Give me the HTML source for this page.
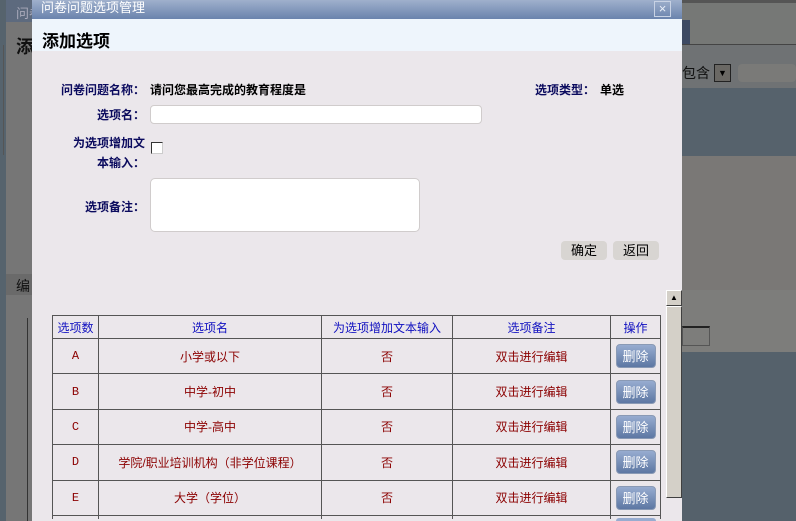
<!DOCTYPE html>
<html><head><meta charset="utf-8"><style>
*{margin:0;padding:0;box-sizing:border-box}
html,body{width:796px;height:521px;overflow:hidden}
body{font-family:"Liberation Sans","Noto Sans CJK SC","WenQuanYi Zen Hei",sans-serif;font-size:12px}
#w{position:absolute;left:0;top:0;width:796px;height:521px;overflow:hidden;background:#767676}
.a{position:absolute;white-space:nowrap}
.lbl{color:#0b0b5e;font-weight:bold;font-size:12px;text-align:right}
#tc{position:absolute;left:52px;top:315px;width:610px;height:206px;overflow:hidden}
table{border-collapse:collapse;width:609px}
td{border:1px solid #555;text-align:center;color:#8b0000;font-size:12px;height:35.4px;padding:0}
td.m{font-family:"Liberation Mono",monospace;font-size:12px}
tr.h td{color:#1010c0;height:23px}
tr.l td{height:4px;border-bottom:none}
.del{display:inline-block;width:40px;height:24px;line-height:23px;border-radius:4px;background:linear-gradient(#97acd0,#5d77a3);color:#fff;border:1px solid #8a9ab5;font-size:13px}
.btn{background:#d8d5d2;border-radius:4px;height:19px;line-height:19px;text-align:center;font-size:13px;color:#000;width:46px}
</style></head><body><div id="w">
<div class="a" style="left:0;top:0;width:6px;height:521px;background:#56636d"></div>
<div class="a" style="left:6px;top:0;width:26px;height:22px;background:#5d6a7e;color:#aab;font-size:13px;padding:3px 0 0 10px;overflow:hidden">问卷</div>
<div class="a" style="left:16px;top:33px;font-size:18px;font-weight:bold;color:#111">添</div>
<div class="a" style="left:3px;top:45px;width:1px;height:110px;background:#555"></div>
<div class="a" style="left:6px;top:274px;width:26px;height:21px;background:#6a6a6a;font-size:14px;color:#111;padding:2px 0 0 10px;overflow:hidden">编</div>
<div class="a" style="left:27px;top:318px;width:1px;height:203px;background:#333"></div>
<div class="a" style="left:682px;top:0;width:114px;height:44px;background:#767876;border-top:3px solid #555"></div>
<div class="a" style="left:682px;top:20px;width:8px;height:24px;background:#3d4a63"></div>
<div class="a" style="left:682px;top:44px;width:114px;height:1px;background:#444"></div>
<div class="a" style="left:682px;top:45px;width:114px;height:43px;background:#6f7274"></div>
<div class="a" style="left:682px;top:63px;font-size:14px;color:#111">包含</div>
<div class="a" style="left:714px;top:64px;width:17px;height:18px;background:#6a6864;border:1px solid #222;color:#000;font-size:9px;text-align:center;line-height:16px">▼</div>
<div class="a" style="left:738px;top:64px;width:58px;height:18px;background:#7a7a78;border-radius:4px"></div>
<div class="a" style="left:682px;top:88px;width:114px;height:68px;background:#56626c"></div>
<div class="a" style="left:682px;top:156px;width:114px;height:134px;background:#7a7876"></div>
<div class="a" style="left:682px;top:290px;width:114px;height:62px;background:#7d7d7b"></div>
<div class="a" style="left:682px;top:326px;width:28px;height:20px;border:1px solid #555;border-top:2px solid #222"></div>
<div class="a" style="left:682px;top:352px;width:114px;height:169px;background:#55616b"></div>
<div class="a" style="left:32px;top:0;width:650px;height:521px;background:#ebe7eb">
 <div class="a" style="left:0;top:0;width:650px;height:19px;background:linear-gradient(#9fb0cc,#6a83ad);color:#fff;font-size:13px;padding:0 0 0 9px;line-height:15px">问卷问题选项管理</div>
 <div class="a" style="left:622px;top:1px;width:17px;height:16px;border:1px solid #c8d2e4;color:#e8eef8;text-align:center;line-height:13px;font-size:13px">×</div>
 <div class="a" style="left:0;top:19px;width:650px;height:32px;background:#eef5fc;font-size:17px;font-weight:bold;padding:8px 0 0 10px;color:#000">添加选项</div>
</div>
<div class="a lbl" style="left:40px;top:81px;width:105px">问卷问题名称：</div>
<div class="a" style="left:150px;top:81px;font-weight:bold;color:#000">请问您最高完成的教育程度是</div>
<div class="a lbl" style="left:520px;top:81px;width:75px">选项类型：</div>
<div class="a" style="left:600px;top:81px;font-weight:bold;color:#000">单选</div>
<div class="a lbl" style="left:60px;top:106px;width:85px">选项名：</div>
<div class="a" style="left:150px;top:105px;width:332px;height:19px;background:#fff;border:1px solid #d0cccc;border-radius:4px"></div>
<div class="a lbl" style="left:50px;top:133px;width:95px;line-height:20px">为选项增加文<br>本输入：</div>
<div class="a" style="left:151px;top:142px;width:12px;height:12px;background:#fff;border:1px solid #333;border-right-color:#ccc;border-bottom-color:#ccc"></div>
<div class="a lbl" style="left:60px;top:198px;width:85px">选项备注：</div>
<div class="a" style="left:150px;top:178px;width:270px;height:54px;background:#fff;border:1px solid #d0cccc;border-radius:5px"></div>
<div class="a btn" style="left:561px;top:241px">确定</div>
<div class="a btn" style="left:613px;top:241px">返回</div>
<div id="tc"><table>
<tr class="h"><td style="width:46px">选项数</td><td style="width:223px">选项名</td><td style="width:131px">为选项增加文本输入</td><td style="width:158px">选项备注</td><td>操作</td></tr>
<tr><td class="m">A</td><td>小学或以下</td><td>否</td><td>双击进行编辑</td><td><span class="del">删除</span></td></tr>
<tr><td class="m">B</td><td>中学-初中</td><td>否</td><td>双击进行编辑</td><td><span class="del">删除</span></td></tr>
<tr><td class="m">C</td><td>中学-高中</td><td>否</td><td>双击进行编辑</td><td><span class="del">删除</span></td></tr>
<tr><td class="m">D</td><td>学院/职业培训机构（非学位课程）</td><td>否</td><td>双击进行编辑</td><td><span class="del">删除</span></td></tr>
<tr><td class="m">E</td><td>大学（学位）</td><td>否</td><td>双击进行编辑</td><td><span class="del">删除</span></td></tr>
<tr class="l"><td></td><td></td><td></td><td></td><td></td></tr>
</table></div>
<div class="a" style="left:616px;top:518px;width:40px;height:3px;background:#97acd0;border-radius:4px 4px 0 0"></div>
<div class="a" style="left:666px;top:290px;width:16px;height:16px;background:#d4d0c8;border:1px solid #fff;border-right-color:#404040;border-bottom-color:#404040;font-size:8px;text-align:center;line-height:13px">▲</div>
<div class="a" style="left:666px;top:306px;width:16px;height:192px;background:#d4d0c8;border:1px solid #fff;border-right-color:#404040;border-bottom-color:#404040"></div>
</div></body></html>
